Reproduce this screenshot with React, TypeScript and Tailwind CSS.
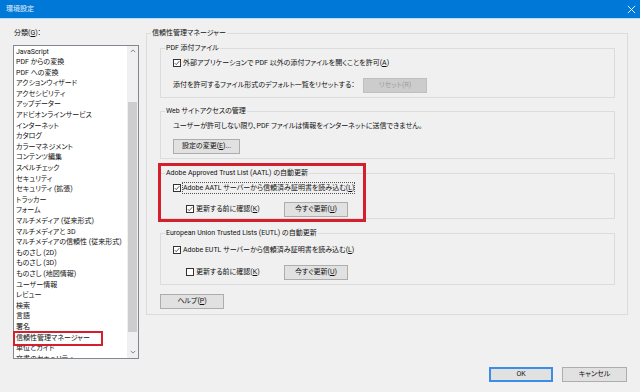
import type { ReactNode } from 'react'

const items = [
  'JavaScript',
  'PDF からの変換',
  'PDF への変換',
  'アクションウィザード',
  'アクセシビリティ',
  'アップデーター',
  'アドビオンラインサービス',
  'インターネット',
  'カタログ',
  'カラーマネジメント',
  'コンテンツ編集',
  'スペルチェック',
  'セキュリティ',
  'セキュリティ (拡張)',
  'トラッカー',
  'フォーム',
  'マルチメディア (従来形式)',
  'マルチメディアと 3D',
  'マルチメディアの信頼性 (従来形式)',
  'ものさし (2D)',
  'ものさし (3D)',
  'ものさし (地図情報)',
  'ユーザー情報',
  'レビュー',
  '検索',
  '言語',
  '署名',
  '信頼性管理マネージャー',
  '単位とガイド',
  '文書のセキュリティ',
]

function Check({ checked }: { checked: boolean }) {
  return (
    <span className="w-[8px] h-[8px] border border-[#333] bg-white flex items-center justify-center shrink-0">
      {checked && (
        <svg viewBox="0 0 8 8" className="w-[6px] h-[6px]">
          <path d="M1 4.2 L3 6.2 L7 1.6" stroke="#222" strokeWidth="1" fill="none" />
        </svg>
      )}
    </span>
  )
}

function Btn({ children, w, disabled, primary }: { children: ReactNode; w: string; disabled?: boolean; primary?: boolean }) {
  return (
    <div
      className={
        'h-[15px] flex items-center justify-center leading-none shrink-0 ' +
        w +
        (disabled
          ? ' bg-[#cccccc] border border-[#bfbfbf] text-[#9c9c9c]'
          : primary
            ? ' bg-[#e1e1e1] border-2 border-[#3a8ee6]'
            : ' bg-[#e1e1e1] border border-[#adadad]')
      }
    >
      {children}
    </div>
  )
}

function Group({ title, h, className, children }: { title: string; h: string; className?: string; children: ReactNode }) {
  return (
    <fieldset className={'border border-[#dcdcdc] ' + h + ' ' + (className ?? '')}>
      <legend className="ml-[4px] px-[1px] leading-[12px]">{title}</legend>
      <div className="pl-[12px]">{children}</div>
    </fieldset>
  )
}

export default function App() {
  return (
    <div className="w-[640px] h-[392px] bg-[#f0f0f0] flex flex-col overflow-hidden text-[#111] text-[7px] whitespace-nowrap font-['Roboto','Noto_Sans_CJK_JP',sans-serif] [font-feature-settings:'palt']">
      {/* title bar */}
      <div className="h-[18px] bg-[#0078d7] flex items-center justify-between pl-[6px] pr-[4px] shrink-0">
        <span className="text-[#e6f1fb] leading-none">環境設定</span>
        <svg viewBox="0 0 10 10" className="w-[9px] h-[9px]">
          <path d="M1 1 L9 9 M9 1 L1 9" stroke="#fff" strokeWidth="1" />
        </svg>
      </div>
      <div className="h-[1px] bg-[#b9dcf5] shrink-0" />

      {/* main */}
      <div className="h-[341px] flex relative shrink-0">
        {/* category list */}
        <div className="w-[146px] pl-[13px] pt-[8px] shrink-0">
          <div className="h-[12px] leading-[12px] pl-[1px]">
            分類(<u>G</u>)：
          </div>
          <div className="mt-[6px] w-[126px] h-[314px] border border-[#828790] bg-white flex relative">
            <div className="flex-1 overflow-hidden pl-[2px] pt-[0.5px]">
              {items.map((it) => (
                <div key={it} className="leading-[10.6px]">
                  {it}
                </div>
              ))}
            </div>
            <div className="w-[11px] bg-[#f0f0f0] flex flex-col items-center">
              <div className="h-[10px] flex items-center justify-center">
                <svg viewBox="0 0 8 5" className="w-[6px] h-[4px]">
                  <path d="M1 4 L4 1 L7 4" stroke="#606060" strokeWidth="1" fill="none" />
                </svg>
              </div>
              <div className="mt-[46px] h-[230px] w-[9px] bg-[#cdcdcd]" />
              <div className="mt-auto h-[12px] flex items-center justify-center">
                <svg viewBox="0 0 8 5" className="w-[6px] h-[4px]">
                  <path d="M1 1 L4 4 L7 1" stroke="#606060" strokeWidth="1" fill="none" />
                </svg>
              </div>
            </div>
            {/* annotation */}
            <div className="absolute left-[-1px] top-[285px] w-[90px] h-[15px] border-2 border-[#d4202c]" />
          </div>
        </div>

        {/* right pane */}
        <div className="flex-1 pt-[8px] pr-[12px]">
          <fieldset className="border border-[#dcdcdc] h-[288px]">
            <legend className="ml-[4px] px-[1px] leading-[12px]">信頼性管理マネージャー</legend>
            <div className="pl-[13px] pr-[12px] pt-[3px]">
              <Group title="PDF 添付ファイル" h="h-[56px]">
                <div className="mt-[3px] h-[12px] flex items-center gap-[2px]">
                  <Check checked />
                  <span>
                    外部アプリケーションで PDF 以外の添付ファイルを開くことを許可(<u>A</u>)
                  </span>
                </div>
                <div className="mt-[9px] h-[14px] flex items-center">
                  <span className="w-[190px] shrink-0">添付を許可するファイル形式のデフォルト一覧をリセットする：</span>
                  <Btn w="w-[64px]" disabled>
                    リセット(R)
                  </Btn>
                </div>
              </Group>

              <Group title="Web サイトアクセスの管理" h="h-[54px]" className="mt-[7px]">
                <div className="mt-[3px] h-[12px] flex items-center">
                  ユーザーが許可しない限り、PDF ファイルは情報をインターネットに送信できません。
                </div>
                <div className="mt-[7px]">
                  <Btn w="w-[67px]">
                    設定の変更(<u>E</u>)...
                  </Btn>
                </div>
              </Group>

              <Group title="Adobe Approved Trust List (AATL) の自動更新" h="h-[52px]" className="mt-[8px]">
                <div className="mt-[3px] h-[12px] flex items-center gap-[2px]">
                  <Check checked />
                  <span className="outline-1 outline-dotted outline-[#555]">
                    Adobe AATL サーバーから信頼済み証明書を読み込む(<u>L</u>)
                  </span>
                </div>
                <div className="mt-[8px] h-[14px] flex items-center pl-[13px]">
                  <div className="w-[98px] flex items-center gap-[2px]">
                    <Check checked />
                    <span>
                      更新する前に確認(<u>K</u>)
                    </span>
                  </div>
                  <Btn w="w-[64px]">
                    今すぐ更新(<u>U</u>)
                  </Btn>
                </div>
              </Group>

              <Group title="European Union Trusted Lists (EUTL) の自動更新" h="h-[58px]" className="mt-[8px]">
                <div className="mt-[5px] h-[12px] flex items-center gap-[2px]">
                  <Check checked />
                  <span>
                    Adobe EUTL サーバーから信頼済み証明書を読み込む(<u>L</u>)
                  </span>
                </div>
                <div className="mt-[9px] h-[14px] flex items-center pl-[13px]">
                  <div className="w-[98px] flex items-center gap-[2px]">
                    <Check checked={false} />
                    <span>
                      更新する前に確認(<u>K</u>)
                    </span>
                  </div>
                  <Btn w="w-[64px]">
                    今すぐ更新(<u>U</u>)
                  </Btn>
                </div>
              </Group>

              <div className="mt-[9px]">
                <Btn w="w-[64px]">
                  ヘルプ(<u>P</u>)
                </Btn>
              </div>
            </div>
          </fieldset>
        </div>

        {/* annotation around AATL */}
        <div className="absolute left-[158px] top-[144px] w-[208px] h-[59px] border-[3px] border-[#d4202c]" />
      </div>

      {/* footer */}
      <div className="flex justify-end gap-[9px] pr-[13px] pt-[7px]">
        <Btn w="w-[64px]" primary>
          OK
        </Btn>
        <Btn w="w-[65px]">キャンセル</Btn>
      </div>
    </div>
  )
}
